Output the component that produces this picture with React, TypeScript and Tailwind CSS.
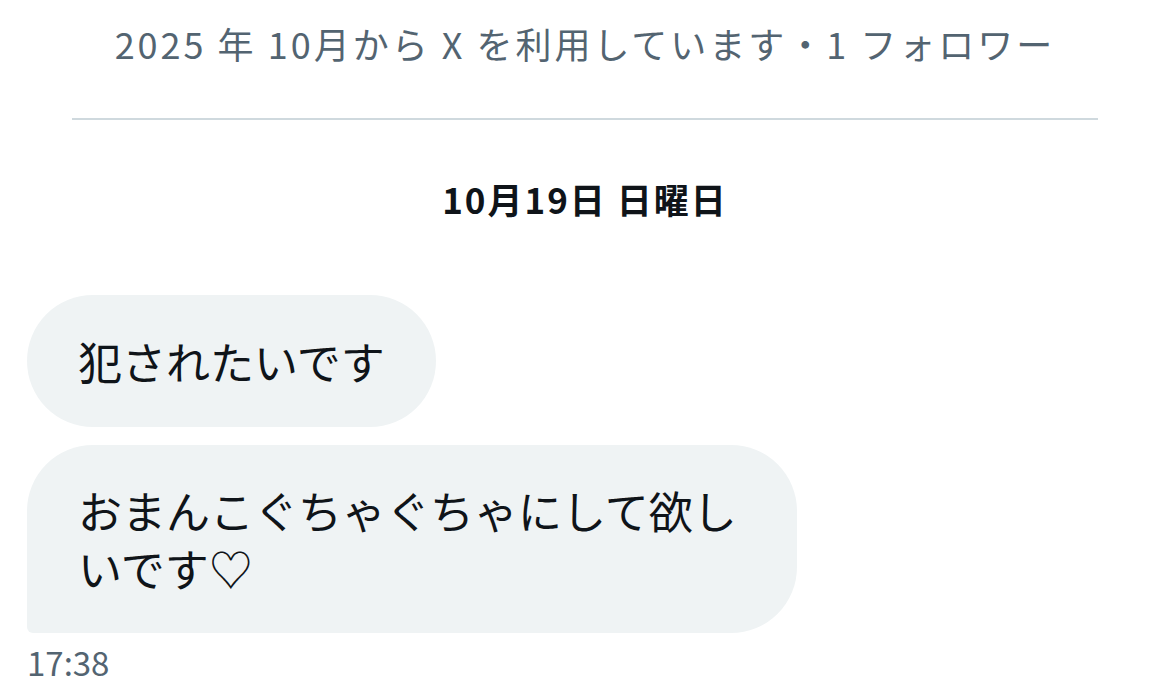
function Bubble({ text, last }: { text: string; last?: boolean }) {
    return (
        <div
            className={
                last
                    ? "max-w-[770px] bg-[#eff3f4] px-[51px] py-[36px] text-[44px] leading-[58px] text-[#0f1419] rounded-[66px] rounded-bl-[6px]"
                    : "max-w-[770px] bg-[#eff3f4] px-[51px] py-[37px] text-[44px] leading-[58px] text-[#0f1419] rounded-[66px]"
            }
        >
            {text}
        </div>
    )
}

function App() {
    return (
        <div
            className="w-[1170px] h-[696px] bg-white overflow-hidden"
            style={{ fontFamily: '"Noto Sans CJK JP", "Noto Sans", sans-serif' }}
        >
            {/* account info */}
            <div className="pt-[19px] text-center text-[36px] leading-[48px] tracking-[3px] text-[#536471]">
                2025 年 10月から X を利用しています・1 フォロワー
            </div>
            <div className="mx-[72px] mt-[51px] h-[2px] bg-[#cfd9de]"></div>

            {/* day separator */}
            <div className="mt-[57px] text-center text-[35px] leading-[44px] tracking-[2px] font-bold text-[#0f1419]">
                10月19日 日曜日
            </div>

            {/* messages */}
            <div className="mt-[74px] pl-[27px] flex flex-col items-start gap-[18px]">
                <Bubble text="犯されたいです" />
                <Bubble text="おまんこぐちゃぐちゃにして欲しいです♡" last />
            </div>
            <div className="pl-[27px] mt-[10px] text-[33px] leading-[38px] text-[#536471]">17:38</div>
        </div>
    )
}

export default App
